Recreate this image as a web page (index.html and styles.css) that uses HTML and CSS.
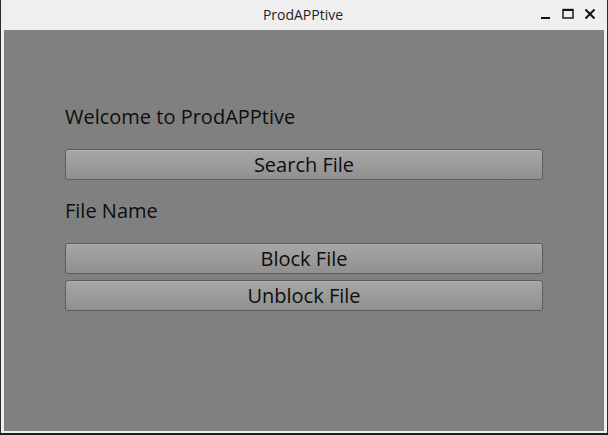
FILE: index.html
```html
<!DOCTYPE html>
<html>
<head>
<meta charset="utf-8">
<link rel="stylesheet" href="styles.css">
</head>
<body>
<div class="window">
  <div class="titlebar">
    <span class="title">ProdAPPtive</span>
    <div class="controls">
      <svg class="ctl" width="12" height="12" viewBox="0 0 12 12"><rect x="1" y="9" width="9" height="2" fill="#111"/></svg>
      <svg class="ctl" width="12" height="12" viewBox="0 0 12 12"><rect x="1" y="1.5" width="10" height="8.5" fill="none" stroke="#111" stroke-width="1.4"/><rect x="1" y="1" width="10" height="2" fill="#111"/></svg>
      <svg class="ctl" width="12" height="12" viewBox="0 0 12 12"><path d="M1.5 1.5 L10.5 10.5 M10.5 1.5 L1.5 10.5" stroke="#111" stroke-width="2"/></svg>
    </div>
  </div>
  <div class="content">
    <div class="panel">
      <div class="label welcome">Welcome to ProdAPPtive</div>
      <button class="btn">Search File</button>
      <div class="label filename">File Name</div>
      <button class="btn block">Block File</button>
      <button class="btn unblock">Unblock File</button>
    </div>
  </div>
</div>
</body>
</html>
```
FILE: styles.css
```css
html, body {
  margin: 0;
  padding: 0;
  width: 608px;
  height: 435px;
  overflow: hidden;
  background: #1e1e1e;
}
.window {
  box-sizing: border-box;
  width: 608px;
  height: 433px;
  border-left: 1px solid #2a2a2a;
  border-right: 1px solid #2a2a2a;
  background: #efefef;
  display: flex;
  flex-direction: column;
  padding: 0 3px 2px 3px;
}
.titlebar {
  height: 30px;
  flex: none;
  position: relative;
  display: flex;
  align-items: center;
  justify-content: center;
  font-family: "Open Sans", "DejaVu Sans", sans-serif;
  font-size: 14px;
  color: #1e1e1e;
}
.title {
  margin-top: -2px;
  margin-left: -2px;
}
.controls {
  position: absolute;
  right: 8px;
  top: 8px;
  display: flex;
  gap: 10px;
}
.ctl { display: block; }
.content {
  flex: 1;
  background: #808080;
  padding: 0 61px 0 61px;
}
.panel {
  display: flex;
  flex-direction: column;
  padding-top: 73px;
}
.label {
  font-family: "Open Sans", "DejaVu Sans", sans-serif;
  font-size: 20px;
  color: #0e0e0e;
  line-height: 27px;
  height: 27px;
}
.welcome { margin-bottom: 19px; }
.filename { margin-top: 17px; margin-bottom: 19px; }
.btn {
  display: block;
  box-sizing: border-box;
  width: 100%;
  height: 31px;
  margin: 0;
  padding: 0;
  border: 1px solid #5c5c5c;
  border-radius: 3px;
  background: linear-gradient(#a6a6a6, #909090);
  font-family: "Open Sans", "DejaVu Sans", sans-serif;
  font-size: 20px;
  color: #0e0e0e;
  box-shadow: inset 0 1px 0 rgba(255,255,255,0.12);
}
.unblock { margin-top: 6px; }
```
